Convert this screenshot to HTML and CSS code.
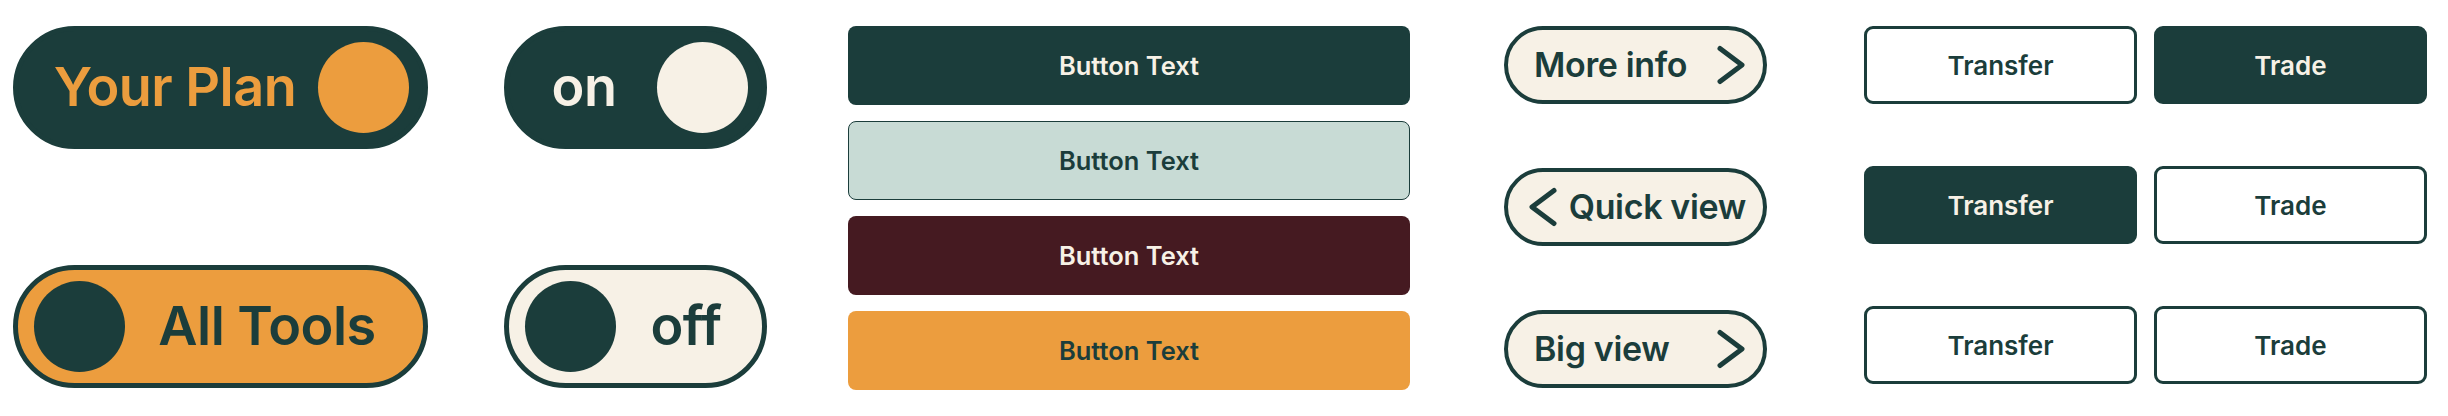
FILE: index.html
```html
<!DOCTYPE html>
<html lang="en">
<head>
<meta charset="utf-8">
<title>Buttons</title>
<link rel="stylesheet" href="styles.css">
</head>
<body>
<main class="board">
  <section class="col col-wide">
    <div class="toggle toggle--plan"><span class="toggle__label">Your Plan</span><span class="knob"></span></div>
    <div class="toggle toggle--tools"><span class="knob"></span><span class="toggle__label">All Tools</span></div>
  </section>

  <section class="col col-narrow">
    <div class="toggle toggle--on"><span class="toggle__label">on</span><span class="knob"></span></div>
    <div class="toggle toggle--off"><span class="knob"></span><span class="toggle__label">off</span></div>
  </section>

  <section class="col col-buttons">
    <button class="btn btn--dark">Button Text</button>
    <button class="btn btn--sage">Button Text</button>
    <button class="btn btn--maroon">Button Text</button>
    <button class="btn btn--orange">Button Text</button>
  </section>

  <section class="col col-links">
    <a class="link-pill">More info
      <svg class="chev" viewBox="0 0 30 40" width="30" height="40"><polyline points="4,3.5 26,20 4,36.5"/></svg>
    </a>
    <a class="link-pill link-pill--back">
      <svg class="chev" viewBox="0 0 30 40" width="30" height="40"><polyline points="26,3.5 4,20 26,36.5"/></svg>
      Quick view
    </a>
    <a class="link-pill">Big view
      <svg class="chev" viewBox="0 0 30 40" width="30" height="40"><polyline points="4,3.5 26,20 4,36.5"/></svg>
    </a>
  </section>

  <section class="col-pairs">
    <button class="tbtn">Transfer</button>
    <button class="tbtn tbtn--solid">Trade</button>
    <button class="tbtn tbtn--solid">Transfer</button>
    <button class="tbtn">Trade</button>
    <button class="tbtn">Transfer</button>
    <button class="tbtn">Trade</button>
  </section>
</main>
</body>
</html>
```

FILE: styles.css
```css
* { box-sizing: border-box; }

html, body {
  margin: 0;
  background: #ffffff;
}

body {
  font-family: Inter, "Noto Sans", "Liberation Sans", sans-serif;
  color: #1b3d3b;
}

.board {
  display: flex;
  align-items: flex-start;
  padding: 26px 0 0 13px;
}

.col {
  display: flex;
  flex-direction: column;
}

/* toggles */
.col-wide { width: 415px; gap: 116px; }
.col-narrow { width: 263px; margin-left: 76px; gap: 116px; }

.toggle {
  height: 123px;
  border-radius: 62px;
  border: 5px solid #1b3d3b;
  display: flex;
  align-items: center;
  padding: 0 14px;
}

.knob {
  flex: none;
  width: 91px;
  height: 91px;
  border-radius: 50%;
}

.toggle__label {
  flex: 1;
  text-align: center;
  font-size: 54px;
  font-weight: 600;
  line-height: 1;
  letter-spacing: -0.01em;
  padding-bottom: 2px;
}

.toggle--plan { background: #1b3d3b; color: #ec9d3e; }
.toggle--plan .knob { background: #ec9d3e; }

.toggle--tools { background: #ec9d3e; color: #1b3d3b; padding-left: 16px; }
.toggle--tools .knob { background: #1b3d3b; }

.toggle--on { background: #1b3d3b; color: #f7f1e6; }
.toggle--on .knob { background: #f7f1e6; }
.toggle--on .toggle__label { padding-right: 12px; }

.toggle--off { background: #f7f1e6; color: #1b3d3b; padding-left: 16px; }
.toggle--off .knob { background: #1b3d3b; }
.toggle--off .toggle__label { padding-left: 8px; }

/* wide buttons */
.col-buttons { width: 562px; margin-left: 81px; gap: 16px; }

.btn {
  height: 79px;
  border: 0;
  border-radius: 8px;
  display: flex;
  align-items: center;
  justify-content: center;
  font-family: inherit;
  font-size: 25.5px;
  font-weight: 600;
  padding: 0;
}

.btn--dark { background: #1b3d3b; color: #f7f1e6; }
.btn--sage { background: #c8dbd5; color: #1b3d3b; border: 1.5px solid #1b3d3b; }
.btn--maroon { background: #451a21; color: #f7f1e6; }
.btn--orange { background: #ec9d3e; color: #1b3d3b; }

/* link pills */
.col-links { width: 263px; margin-left: 94px; gap: 64px; }

.link-pill {
  height: 78px;
  border: 4px solid #1b3d3b;
  border-radius: 40px;
  background: #f7f1e6;
  color: #1b3d3b;
  display: flex;
  align-items: center;
  justify-content: space-between;
  padding: 0 17px 0 26px;
  font-size: 34px;
  font-weight: 600;
  letter-spacing: -0.01em;
  line-height: 1;
}

.link-pill--back { padding-left: 20px; }

.chev {
  flex: none;
  fill: none;
  stroke: #1b3d3b;
  stroke-width: 5;
  stroke-linecap: round;
  stroke-linejoin: round;
}

/* transfer / trade */
.col-pairs {
  margin-left: 97px;
  display: grid;
  grid-template-columns: 273px 273px;
  column-gap: 17px;
  row-gap: 62px;
}

.tbtn {
  height: 78px;
  border: 3px solid #1b3d3b;
  border-radius: 9px;
  background: #ffffff;
  color: #1b3d3b;
  font-family: inherit;
  font-size: 26px;
  font-weight: 600;
  display: flex;
  align-items: center;
  justify-content: center;
  padding: 0;
}

.tbtn--solid { background: #1b3d3b; color: #f7f1e6; }
```
